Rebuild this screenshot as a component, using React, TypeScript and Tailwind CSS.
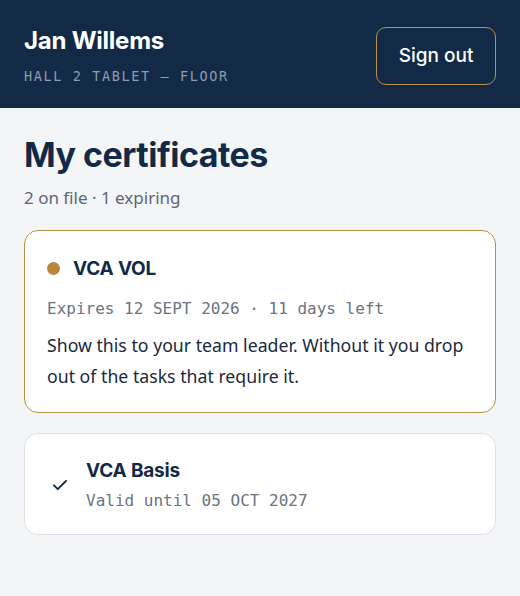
import React from 'react';

const heading = "font-['Inter','Noto_Sans',sans-serif]";
const body = "font-['Noto_Sans','Inter',sans-serif]";
const mono = "font-['DejaVu_Sans_Mono','Liberation_Mono',monospace]";

export default function App() {
  return (
    <div className={`min-h-[596px] w-full bg-[#f3f5f7] ${body}`}>
      <header className="flex h-[108px] items-center justify-between bg-[#132a47] px-6 pt-[4px]">
        <div className="flex flex-col">
          <h1 className={`${heading} text-[24px] font-bold leading-none text-white tracking-[-0.01em]`}>Jan Willems</h1>
          <p className={`${mono} mt-[17px] text-[13.5px] leading-none tracking-[0.12em] text-[#8c9bb0]`}>HALL 2 TABLET — FLOOR</p>
        </div>
        <button className={`${heading} h-[58px] w-[120px] rounded-[10px] border border-[#b8904a] text-[19px] font-medium text-white`}>
          Sign out
        </button>
      </header>

      <main className="px-6 pt-[30px]">
        <h2 className={`${heading} text-[34px] font-bold leading-none tracking-[-0.015em] text-[#132a47]`}>My certificates</h2>
        <p className="mt-[17px] text-[17px] leading-none text-[#5b6675]">2 on file · 1 expiring</p>

        <div className="mt-[24px] flex flex-col gap-[20px]">
          <div className="rounded-[14px] border border-[#b8904a] bg-white px-[22px] pt-[28px] pb-[20px]">
            <div className="flex items-center gap-[13px]">
              <span className="h-[13px] w-[13px] rounded-full bg-[#b8873a]" />
              <span className={`${heading} text-[19px] font-bold leading-none text-[#132a47] tracking-[-0.01em]`}>VCA VOL</span>
            </div>
            <p className={`${mono} mt-[23px] text-[16px] leading-none text-[#6b7480]`}>Expires 12 SEPT 2026 · 11 days left</p>
            <p className="mt-[13px] text-[17.7px] leading-[31px] text-[#1b2a3d]">
              Show this to your team leader. Without it you drop out of the tasks that require it.
            </p>
          </div>

          <div className="flex items-center gap-[17px] rounded-[14px] border border-[#dde1e6] bg-white px-[26px] pt-[27px] pb-[25px]">
            <svg width="18" height="18" viewBox="0 0 24 24" fill="none" stroke="#132a47" strokeWidth="2.6" strokeLinecap="round" strokeLinejoin="round">
              <path d="M4 12.5l5 5L20 6.5" />
            </svg>
            <div className="flex flex-col">
              <span className={`${heading} text-[19px] font-bold leading-none text-[#132a47] tracking-[-0.01em]`}>VCA Basis</span>
              <span className={`${mono} mt-[13px] text-[16px] leading-none text-[#6b7480]`}>Valid until 05 OCT 2027</span>
            </div>
          </div>
        </div>
      </main>
    </div>
  );
}
